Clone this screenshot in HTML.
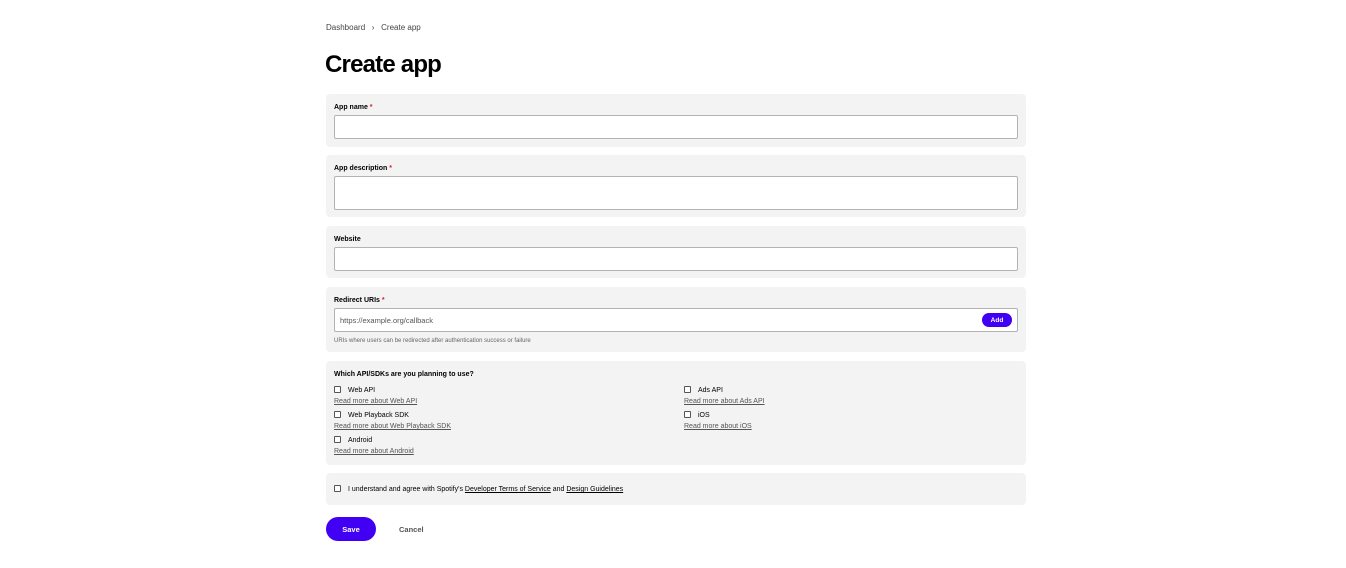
<!DOCTYPE html>
<html><head><style>
*{box-sizing:border-box;margin:0;padding:0}
body{width:1346px;height:568px;background:#fff;font-family:"Liberation Sans",sans-serif;color:#000;position:relative;overflow:hidden}
.a{position:absolute}
.p{position:absolute;left:326px;width:700px;background:#f3f3f3;border-radius:4px}
.lb{position:absolute;left:8px;font-size:7px;font-weight:bold;white-space:nowrap}
.lb b{color:#d0202f}
.in{position:absolute;left:8px;width:684px;background:#fff;border:1px solid #b3b3b3;border-radius:2px}
.t{font-size:7px;white-space:nowrap;position:absolute}
.cb{position:absolute;width:7px;height:7px;border:1px solid #555;border-radius:1px;background:#fff}
.lk{font-size:7px;color:#555;text-decoration:underline;position:absolute;white-space:nowrap}
</style></head><body>
<div class="a t" style="left:326px;top:23px;font-size:8px;color:#444">Dashboard &nbsp;&nbsp;›&nbsp;&nbsp; Create app</div>
<div class="a" style="left:325px;top:51px;font-size:24px;font-weight:bold;letter-spacing:-0.8px">Create app</div>

<div class="p" style="top:94px;height:53px">
<div class="lb" style="top:10px">App name <b>*</b></div>
<div class="in" style="top:21px;height:24px"></div></div>

<div class="p" style="top:155px;height:62px">
<div class="lb" style="top:10px">App description <b>*</b></div>
<div class="in" style="top:21px;height:34px"></div></div>

<div class="p" style="top:226px;height:52px">
<div class="lb" style="top:10px">Website</div>
<div class="in" style="top:21px;height:24px"></div></div>

<div class="p" style="top:287px;height:65px">
<div class="lb" style="top:10px">Redirect URIs <b>*</b></div>
<div class="in" style="top:21px;height:24px"><span class="t" style="left:5px;top:7px;font-size:7.5px;color:#555">https://example.org/callback</span>
<div class="a" style="right:5px;top:4px;width:30px;height:14px;border-radius:7px;background:#4100f4;color:#fff;font-size:6.5px;font-weight:bold;text-align:center;line-height:14px;padding-top:1px">Add</div></div>
<div class="t" style="left:8px;top:51px;font-size:6px;color:#666">URIs where users can be redirected after authentication success or failure</div></div>

<div class="p" style="top:361px;height:104px">
<div class="lb" style="top:10px">Which API/SDKs are you planning to use?</div>
<div class="cb" style="left:8px;top:25px"></div><div class="t" style="left:22px;top:26px">Web API</div>
<div class="lk" style="left:8px;top:37px">Read more about Web API</div>
<div class="cb" style="left:8px;top:50px"></div><div class="t" style="left:22px;top:51px">Web Playback SDK</div>
<div class="lk" style="left:8px;top:62px">Read more about Web Playback SDK</div>
<div class="cb" style="left:8px;top:75px"></div><div class="t" style="left:22px;top:76px">Android</div>
<div class="lk" style="left:8px;top:87px">Read more about Android</div>
<div class="cb" style="left:358px;top:25px"></div><div class="t" style="left:372px;top:26px">Ads API</div>
<div class="lk" style="left:358px;top:37px">Read more about Ads API</div>
<div class="cb" style="left:358px;top:50px"></div><div class="t" style="left:372px;top:51px">iOS</div>
<div class="lk" style="left:358px;top:62px">Read more about iOS</div>
</div>

<div class="p" style="top:473px;height:32px">
<div class="cb" style="left:8px;top:12px"></div>
<div class="t" style="left:22px;top:13px">I understand and agree with Spotify's <u>Developer Terms of Service</u> and <u>Design Guidelines</u></div></div>

<div class="a" style="left:326px;top:517px;width:50px;height:24px;border-radius:12px;background:#4100f4;color:#fff;font-size:7.5px;font-weight:bold;text-align:center;line-height:24px;padding-top:1px">Save</div>
<div class="a t" style="left:399px;top:525px;font-size:7.5px;color:#555;font-weight:bold">Cancel</div>
</body></html>
